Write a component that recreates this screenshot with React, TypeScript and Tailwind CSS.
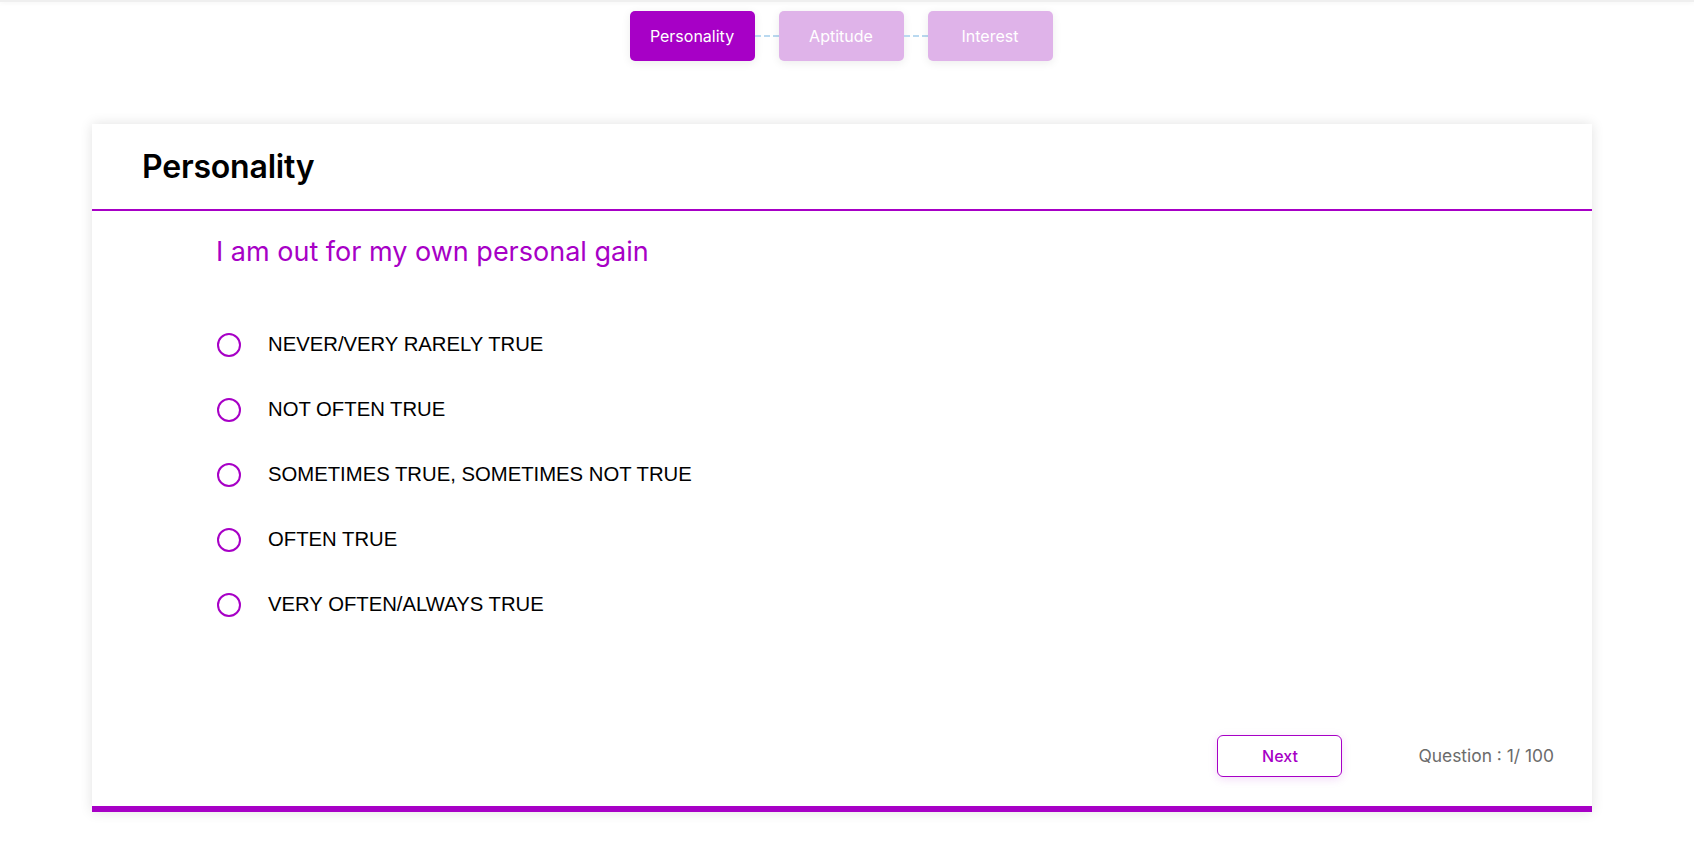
import React from 'react';

const steps = ['Personality', 'Aptitude', 'Interest'];

const options = [
  'NEVER/VERY RARELY TRUE',
  'NOT OFTEN TRUE',
  'SOMETIMES TRUE, SOMETIMES NOT TRUE',
  'OFTEN TRUE',
  'VERY OFTEN/ALWAYS TRUE',
];

export default function App() {
  return (
    <div className="min-h-screen bg-white font-['Inter',sans-serif]">
      <div className="h-[2px] bg-[#efefef] shadow-[0_1px_4px_rgba(0,0,0,0.06)]"></div>

      <div className="ml-[92px] w-[1500px]">
        {/* stepper */}
        <div className="mt-[9px] flex items-center justify-center pr-[2px]">
          {steps.map((s, i) => (
            <React.Fragment key={s}>
              {i > 0 && <div className="w-[24px] border-t-2 border-dashed border-[#b9d9f0]"></div>}
              <div
                className={
                  'flex h-[50px] w-[125px] items-center justify-center rounded-[5px] text-[16px] text-white shadow-[0_2px_10px_rgba(0,0,0,0.08)] ' +
                  (i === 0 ? 'bg-[#a700c6]' : 'bg-[#dfb3e9]')
                }
              >
                {s}
              </div>
            </React.Fragment>
          ))}
        </div>

        {/* card */}
        <div className="mt-[63px] bg-white shadow-[0_0_12px_rgba(0,0,0,0.12)]">
          <div className="flex h-[87px] items-center border-b-2 border-[#a700c6] pl-[50px]">
            <h1 className="text-[32px] font-semibold tracking-[-0.2px] text-black">Personality</h1>
          </div>

          <div className="flex flex-col">
            <p className="pl-[124px] pt-[23px] text-[27px] leading-[36px] text-[#a700c6]">
              I am out for my own personal gain
            </p>

            <div className="mt-[42px] flex flex-col pl-[125px]">
              {options.map((o) => (
                <label key={o} className="flex h-[65px] cursor-pointer items-center gap-[27px]">
                  <span className="h-[24px] w-[24px] rounded-full border-2 border-[#a700c6]"></span>
                  <span className="font-['Liberation_Sans',Arial,sans-serif] text-[20.3px] text-black">{o}</span>
                </label>
              ))}
            </div>

            <div className="mt-[98px] flex items-center justify-end pb-[29px] pr-[38px]">
              <button className="h-[42px] w-[125px] rounded-[6px] border border-[#a700c6] bg-white text-[16px] font-medium text-[#a700c6] shadow-[0_2px_10px_rgba(167,0,198,0.15)]">
                Next
              </button>
              <span className="ml-[76px] text-[17.4px] text-[#6b6b6b]">Question : 1/ 100</span>
            </div>
          </div>

          <div className="h-[6px] bg-[#a700c6]"></div>
        </div>
      </div>
    </div>
  );
}
